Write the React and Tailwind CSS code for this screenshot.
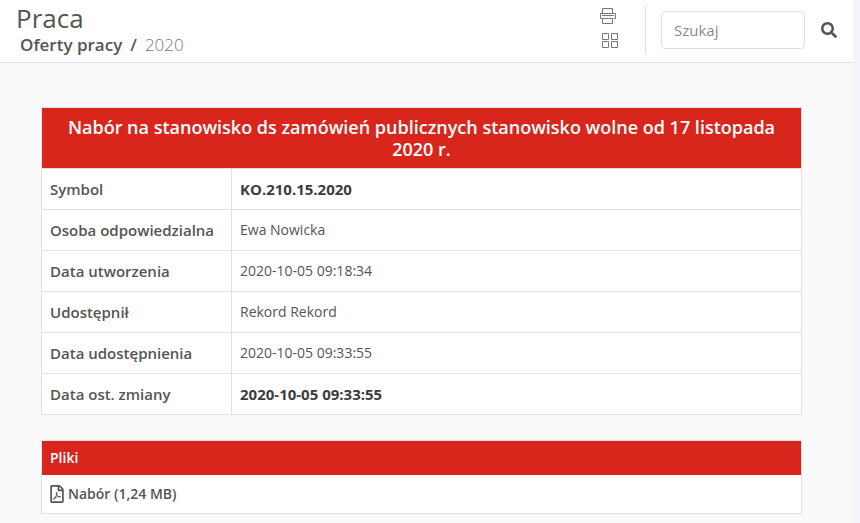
import { useState } from 'react'
import { FaRegFilePdf, FaSearch } from 'react-icons/fa'

const details = [
  { label: 'Symbol', value: 'KO.210.15.2020', strong: true },
  { label: 'Osoba odpowiedzialna', value: 'Ewa Nowicka' },
  { label: 'Data utworzenia', value: '2020-10-05 09:18:34' },
  { label: 'Udostępnił', value: 'Rekord Rekord' },
  { label: 'Data udostępnienia', value: '2020-10-05 09:33:55' },
  { label: 'Data ost. zmiany', value: '2020-10-05 09:33:55', strong: true },
]

const files = [{ name: 'Nabór', size: '1,24 MB' }]

function PrinterIcon() {
  return (
    <svg width="16" height="16" viewBox="0 0 16 16" fill="none" stroke="currentColor" aria-hidden="true">
      <path d="M2.5 5V.5h10V5" />
      <path d="M2.5 10.5h-2v-5h15v5h-2" />
      <path d="M2 7.5h12" />
      <path d="M2.5 10.5h10v5h-10z" />
    </svg>
  )
}

function GridIcon() {
  return (
    <svg width="16" height="16" viewBox="0 0 16 16" fill="none" stroke="currentColor" aria-hidden="true">
      <path d="M.5.5h6v6h-6zM9.5.5h6v6h-6zM.5 8.5h6v6h-6zM9.5 8.5h6v6h-6z" />
    </svg>
  )
}

function Header() {
  const [query, setQuery] = useState('')

  return (
    <header className="flex items-start justify-between border-b border-[#e1e4ee] bg-white pr-4 pl-4">
      <div className="pt-1 pb-[5px]">
        <h1 className="text-[26px] leading-7">Praca</h1>
        <nav className="flex gap-2 pl-1 text-[17px] leading-[25px]" aria-label="breadcrumb">
          <a href="#oferty" className="font-semibold">Oferty pracy</a>
          <span className="font-semibold">/</span>
          <span className="font-light text-[#777]">2020</span>
        </nav>
      </div>

      <div className="flex items-start pt-1.5">
        <div className="flex flex-col gap-[9px] pt-0.5 pr-[27px] text-[#777]">
          <button type="button" aria-label="Drukuj"><PrinterIcon /></button>
          <button type="button" aria-label="Widok" className="ml-0.5"><GridIcon /></button>
        </div>
        <form className="flex h-12 items-center border-l border-[#dcdfe8] pl-[15px]" onSubmit={(e) => e.preventDefault()}>
          <input
            type="text"
            aria-label="Szukaj"
            placeholder="Szukaj"
            value={query}
            onChange={(e) => setQuery(e.target.value)}
            className="h-[38px] w-36 rounded border border-[#dee2e6] bg-white px-3 text-[15px] placeholder:text-[#868e96] focus:outline-none"
          />
          <button type="submit" aria-label="Wyszukaj" className="ml-4">
            <FaSearch size={16} />
          </button>
        </form>
      </div>
    </header>
  )
}

function DetailsTable() {
  return (
    <table className="w-full table-fixed border-collapse border border-[#dee2e6] bg-white">
      <colgroup>
        <col className="w-1/4" />
        <col />
      </colgroup>
      <thead>
        <tr>
          <th colSpan={2} className="bg-[#d9261c] px-5 py-2 text-lg leading-[22px] font-semibold text-white">
            Nabór na stanowisko ds zamówień publicznych stanowisko wolne od 17 listopada 2020 r.
          </th>
        </tr>
      </thead>
      <tbody>
        {details.map((row) => (
          <tr key={row.label} className="h-[41px] border border-[#dee2e6]">
            <th scope="row" className="border-r border-[#dee2e6] px-2 text-left text-[15px] font-semibold whitespace-nowrap">
              {row.label}
            </th>
            <td className={row.strong ? 'px-2 text-[15px] font-bold text-[#3c3c3c]' : 'px-2 text-sm'}>
              {row.value}
            </td>
          </tr>
        ))}
      </tbody>
    </table>
  )
}

function FilesTable() {
  return (
    <table className="w-full border-collapse border border-[#dee2e6] bg-white">
      <thead>
        <tr className="h-[34px]">
          <th className="bg-[#d9261c] px-2 text-left text-sm font-semibold text-white">Pliki</th>
        </tr>
      </thead>
      <tbody>
        {files.map((file) => (
          <tr key={file.name} className="h-[39px]">
            <td className="px-2 text-sm font-semibold">
              <a href="#nabor" className="flex items-center gap-1">
                <FaRegFilePdf className="h-[18px] w-[14px]" />
                {file.name} ({file.size})
              </a>
            </td>
          </tr>
        ))}
      </tbody>
    </table>
  )
}

export default function App() {
  return (
    <div className="min-h-screen bg-[#f4f5fa] pr-[7px] font-['Open_Sans','Noto_Sans',sans-serif] text-[#555]">
      <div className="min-h-screen bg-[#fafafa]">
        <Header />
        <main className="flex flex-col gap-[25px] pt-11 pr-[51px] pb-2 pl-[41px]">
          <DetailsTable />
          <FilesTable />
        </main>
      </div>
    </div>
  )
}
